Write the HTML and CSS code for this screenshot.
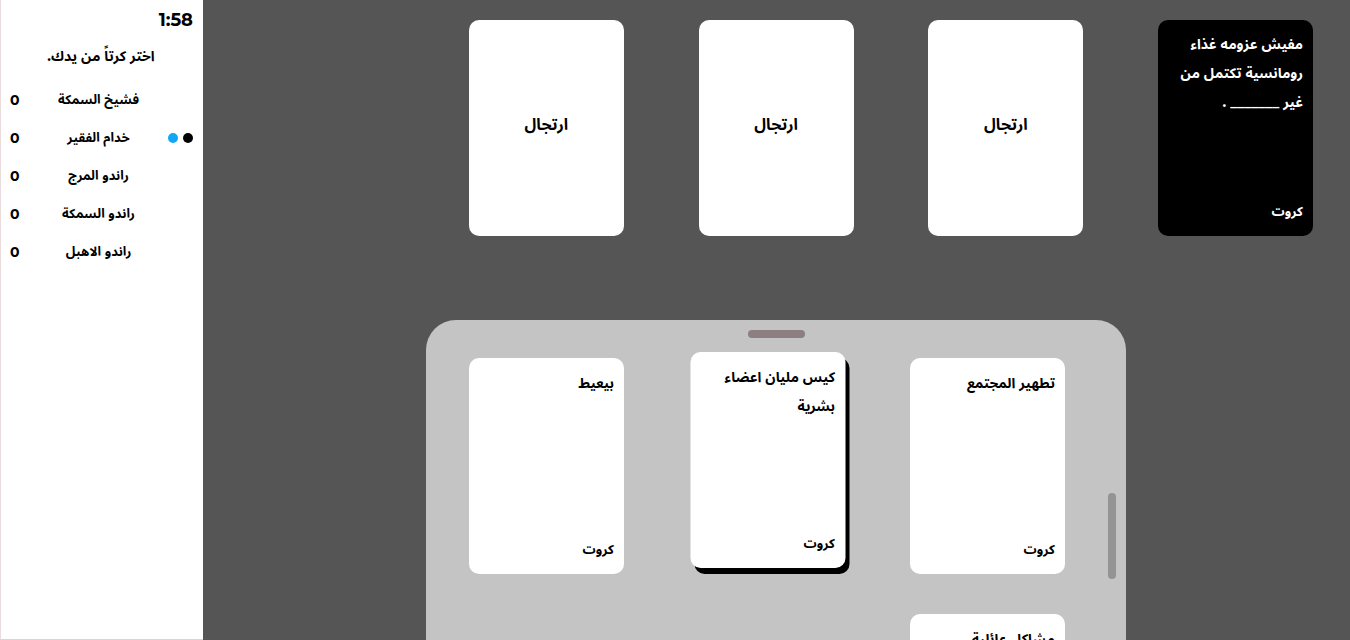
FILE: index.html
```html
<!DOCTYPE html>
<html lang="ar">
<head>
<meta charset="utf-8">
<title>كروت</title>
<link rel="stylesheet" href="styles.css">
</head>
<body>
<div class="app">
  <aside class="sidebar">
    <div class="timer">1:58</div>
    <div class="instruction" dir="rtl">اختر كرتاً من يدك.</div>
    <ul class="players">
      <li class="player"><span class="score">0</span><span class="name" dir="rtl">فشيخ السمكة</span><span class="dots"></span></li>
      <li class="player"><span class="score">0</span><span class="name" dir="rtl">خدام الفقير</span><span class="dots"><i class="dot blue"></i><i class="dot black"></i></span></li>
      <li class="player"><span class="score">0</span><span class="name" dir="rtl">راندو المرج</span><span class="dots"></span></li>
      <li class="player"><span class="score">0</span><span class="name" dir="rtl">راندو السمكة</span><span class="dots"></span></li>
      <li class="player"><span class="score">0</span><span class="name" dir="rtl">راندو الاهبل</span><span class="dots"></span></li>
    </ul>
  </aside>
  <main class="board">
    <section class="table" dir="rtl">
      <div class="card card-black">
        <p class="card-text">مفيش عزومه غذاء رومانسية تكتمل من غير _______ .</p>
        <p class="card-brand">كروت</p>
      </div>
      <div class="card card-back"><span>ارتجال</span></div>
      <div class="card card-back"><span>ارتجال</span></div>
      <div class="card card-back"><span>ارتجال</span></div>
    </section>
    <section class="hand">
      <div class="handle"></div>
      <div class="hand-grid" dir="rtl">
        <div class="card card-white">
          <p class="card-text">تطهير المجتمع</p>
          <p class="card-brand">كروت</p>
        </div>
        <div class="card card-white raised">
          <p class="card-text">كيس مليان اعضاء بشرية</p>
          <p class="card-brand">كروت</p>
        </div>
        <div class="card card-white">
          <p class="card-text">بيعيط</p>
          <p class="card-brand">كروت</p>
        </div>
        <div class="card card-white">
          <p class="card-text">مشاكل عائلية</p>
          <p class="card-brand">كروت</p>
        </div>
      </div>
      <div class="scroll-thumb"></div>
    </section>
  </main>
</div>
</body>
</html>
```

FILE: styles.css
```css
* { box-sizing: border-box; }

html, body {
  margin: 0;
  padding: 0;
  height: 100%;
}

body {
  font-family: "Montserrat", "Noto Sans Arabic", "DejaVu Sans", sans-serif;
  color: #000;
  overflow: hidden;
}

.app {
  display: flex;
  height: 640px;
}

.sidebar {
  width: 203px;
  flex: 0 0 203px;
  background: #fff;
  border-left: 1px solid #eadcdc;
  border-bottom: 1px solid #d6d6d6;
  padding-top: 9px;
}

.timer {
  text-align: right;
  padding-right: 10px;
  font-size: 18px;
  font-weight: 700;
  line-height: 22px;
}

.instruction {
  text-align: center;
  font-size: 14px;
  font-weight: 700;
  line-height: 20px;
  margin-top: 15px;
  padding-right: 2px;
}

.players {
  list-style: none;
  margin: 15px 0 0;
  padding: 0;
}

.player {
  display: flex;
  align-items: center;
  height: 38px;
  padding: 0 10px 0 9px;
}

.score {
  width: 20px;
  font-size: 14px;
  font-weight: 700;
}

.name {
  flex: 1;
  text-align: center;
  font-size: 13px;
  font-weight: 700;
  padding-left: 4px;
}

.dots {
  width: 30px;
  display: flex;
  justify-content: flex-end;
  gap: 5px;
}

.dot {
  width: 10px;
  height: 10px;
  border-radius: 50%;
  display: block;
}

.dot.blue { background: #10a8f5; }
.dot.black { background: #000; }

.board {
  flex: 1;
  background: #555555;
  display: flex;
  flex-direction: column;
  align-items: flex-start;
  overflow: hidden;
}

.table {
  align-self: stretch;
  display: grid;
  grid-template-columns: repeat(5, 155px);
  justify-content: space-between;
  padding: 20px 37px 0 36px;
}

.card {
  width: 155px;
  height: 216px;
  border-radius: 10px;
  display: flex;
  flex-direction: column;
  justify-content: space-between;
  padding: 10px 10px 10px 10px;
  text-align: right;
}

.card p { margin: 0; }

.card-text {
  font-size: 14px;
  font-weight: 700;
  line-height: 29px;
}

.card-brand {
  font-size: 13px;
  font-weight: 700;
  line-height: 29px;
}

.card-black {
  background: #000;
  color: #fff;
}

.card-back {
  background: #fff;
  justify-content: center;
  align-items: center;
  font-size: 16px;
  font-weight: 700;
  padding-bottom: 16px;
}

.card-white {
  background: #fff;
  padding-top: 11px;
}

.raised {
  transform: translate(0.5px, -6px);
  box-shadow: 4px 6px 0 #000;
}

.hand {
  position: relative;
  width: 700px;
  flex: 1;
  margin-top: 84px;
  margin-left: 223px;
  background: #c4c4c4;
  border-radius: 30px 30px 0 0;
  padding: 10px 61px 0 43px;
}

.handle {
  width: 57px;
  height: 8px;
  border-radius: 4px;
  background: #8d7f80;
  margin: 0 auto 20px;
  position: relative;
  left: 9px;
}

.hand-grid {
  display: grid;
  grid-template-columns: repeat(3, 155px);
  column-gap: 65.5px;
  row-gap: 40px;
}

.scroll-thumb {
  position: absolute;
  right: 10px;
  top: 173px;
  width: 8px;
  height: 86px;
  border-radius: 4px;
  background: #939393;
}
```
